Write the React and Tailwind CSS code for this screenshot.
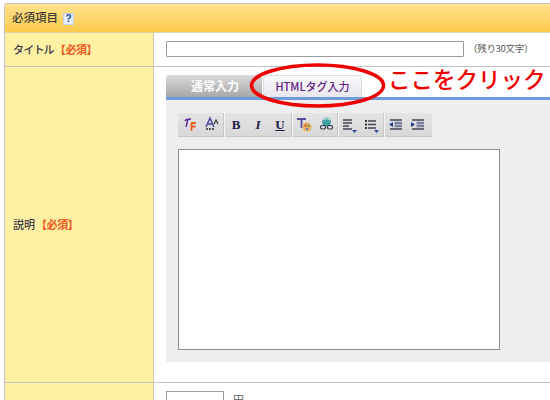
const jp = { fontFamily: '"Noto Sans CJK JP", sans-serif' };

function Sep() {
  return <div className="w-[2px] h-[24px] bg-[linear-gradient(90deg,#c8c8c8_50%,#f4f4f4_50%)]" />;
}

function Btn({ children }) {
  return <div className="w-[22px] h-[24px] flex items-center justify-center shrink-0">{children}</div>;
}

function Letter({ children, italic, underline }) {
  return (
    <span
      className={`font-['Liberation_Serif',serif] font-bold text-[13px] leading-none text-[#20204a] ${italic ? "italic" : ""} ${underline ? "underline" : ""}`}
    >
      {children}
    </span>
  );
}

function Lines({ arrow, bullets }) {
  return (
    <svg width="16" height="16" viewBox="0 0 16 16">
      {bullets && <rect x="1" y="3" width="2" height="2" fill="#334" />}
      {bullets && <rect x="1" y="6.500" width="2" height="2" fill="#334" />}
      {bullets && <rect x="1" y="10" width="2" height="2" fill="#334" />}
      <path
        d={bullets ? "M4 4h8M4 7.500h8M4 11h8" : "M1 3h9M1 6h9M1 9h6M1 12h9"}
        stroke="#445"
        strokeWidth="1.400"
      />
      {arrow && <path d="M10 13h5l-2.500 3z" fill="#2a4a9a" />}
    </svg>
  );
}

function Indent({ dir }) {
  return (
    <svg width="16" height="16" viewBox="0 0 16 16">
      <path d="M2 3h12M7 6h7M7 9h7M2 12h12" stroke="#445" strokeWidth="1.400" />
      <rect x="6" y="4.500" width="8" height="6" fill="#8a94b8" opacity="0.55" />
      <path d={dir === "l" ? "M1 7.500 5 5v5z" : "M5 7.500 1 5v5z"} fill="#1f3a8a" />
    </svg>
  );
}

export default function App() {
  return (
    <div className="relative w-[550px] h-[400px] overflow-hidden bg-white" style={jp}>
      <div className="pt-[3px] pl-[4px] w-[560px]">
        <div className="border-l border-t border-[#c4c4c4] rounded-tl-[3px]">
          <div className="h-[29px] flex items-center pl-[7px] gap-[5px] bg-[linear-gradient(180deg,#ffe28e,#fccb4b)] border-b border-[#d9d3b0]">
            <span className="text-[11.5px] font-medium leading-none text-[#3a3a3a]">必須項目</span>
            <span className="w-[11px] h-[12px] mt-[1px] flex items-center justify-center bg-[#e4ecfa] border border-[#c6d2e8] text-[10px] font-bold leading-none text-[#26489a] font-['Liberation_Sans',sans-serif]">
              ?
            </span>
          </div>

          <div className="flex h-[34px] border-b border-[#c4c4c4]">
            <div className="w-[149px] shrink-0 bg-[#fff1a3] border-r border-[#c9c9b0] flex items-center pl-[8px] text-[11px] font-medium text-[#3a3a4a]">
              <span className="tracking-[-0.8px]">タイトル</span>
              <span className="text-[#f0561c] ml-[1px] font-bold tracking-[-0.4px]">【必須】</span>
            </div>
            <div className="flex items-center pl-[12px] pb-[2px]">
              <div className="w-[298px] h-[16px] border border-[#9c9c9c] rounded-[1px] bg-white" />
              <span className="ml-[4px] text-[9.5px] tracking-[-0.3px] text-[#555]">（残り30文字）</span>
            </div>
          </div>

          <div className="flex h-[316px] border-b border-[#c4c4c4]">
            <div className="w-[149px] shrink-0 bg-[#fff1a3] border-r border-[#c9c9b0] flex items-center pl-[8px] text-[11px] font-medium text-[#3a3a4a]">
              説明<span className="text-[#f0561c] ml-[1px] font-bold tracking-[-0.4px]">【必須】</span>
            </div>
            <div className="pl-[12px] pt-[8px] flex-1">
              <div className="flex h-[22px] items-end">
                <div className="w-[96px] h-[22px] rounded-t-[4px] bg-[linear-gradient(180deg,#d9d9d9,#a8a8a8)] flex items-center justify-center text-[12px] font-bold text-white pl-[2px]">
                  通常入力
                </div>
                <div className="ml-[1px] w-[99px] h-[22px] rounded-t-[4px] bg-[linear-gradient(180deg,#fbfbfd,#e6e6ec)] border border-b-0 border-[#dcdce2] flex items-center justify-center text-[11px] font-medium text-[#62207e]">
                  HTMLタグ入力
                </div>
              </div>
              <div className="h-[3px] bg-[#6f9bd8]" />
              <div className="h-[262px] bg-[#eeeef0] pl-[12px] pt-[13px]">
                <div className="w-[254px] h-[24px] bg-[linear-gradient(180deg,#e4e4e4,#d8d8d8)] border-b border-[#c8c8c8] flex items-center pl-[1px]">
                  <Btn>
                    <svg width="17" height="17" viewBox="0 0 17 17">
                      <path d="M3 5c1-2 4-2 6-2M6 3 4 11" stroke="#5a2a9a" strokeWidth="1.400" fill="none" />
                      <path d="M9 7h5M9.500 7v8M9.500 10.500h4" stroke="#e8601c" strokeWidth="1.800" fill="none" />
                    </svg>
                  </Btn>
                  <Btn>
                    <svg width="17" height="17" viewBox="0 0 17 17">
                      <path d="M2 11 6 2l4 9M3.500 8h5" stroke="#4a4a9a" strokeWidth="1.500" fill="none" />
                      <path d="M10 8l2-4 2 4" stroke="#333" strokeWidth="1.200" fill="none" />
                      <path d="M2 13h9" stroke="#555" strokeWidth="2" strokeDasharray="2 1" />
                    </svg>
                  </Btn>
                  <Sep />
                  <Btn><Letter>B</Letter></Btn>
                  <Btn><Letter italic>I</Letter></Btn>
                  <Btn><Letter underline>U</Letter></Btn>
                  <Sep />
                  <Btn>
                    <svg width="17" height="17" viewBox="0 0 17 17">
                      <path d="M1 3h9M5.500 3v9" stroke="#5a4a9a" strokeWidth="1.800" />
                      <circle cx="11" cy="11" r="4.500" fill="#e8b060" />
                      <circle cx="9.500" cy="9.500" r="1" fill="#d83030" />
                      <circle cx="12.500" cy="10" r="1" fill="#30a040" />
                      <circle cx="11" cy="13" r="1" fill="#3060c0" />
                    </svg>
                  </Btn>
                  <Btn>
                    <svg width="17" height="17" viewBox="0 0 17 17">
                      <circle cx="8.500" cy="6" r="4.500" fill="#3fa0a0" />
                      <path d="M5 4c2-2 5-2 7 0" stroke="#c8e8e0" strokeWidth="1.200" fill="none" />
                      <rect x="2.500" y="9.500" width="5" height="3.500" rx="1.500" fill="#dde" stroke="#334" strokeWidth="1.200" />
                      <rect x="9.500" y="9.500" width="5" height="3.500" rx="1.500" fill="#dde" stroke="#334" strokeWidth="1.200" />
                    </svg>
                  </Btn>
                  <Sep />
                  <Btn><Lines arrow /></Btn>
                  <Btn><Lines arrow bullets /></Btn>
                  <Sep />
                  <Btn><Indent dir="l" /></Btn>
                  <Btn><Indent dir="r" /></Btn>
                </div>
                <div className="mt-[12px] w-[322px] h-[201px] bg-white border border-[#8e8e8e]" />
              </div>
            </div>
          </div>

          <div className="flex h-[30px]">
            <div className="w-[149px] shrink-0 bg-[#fff1a3] border-r border-[#c9c9b0]" />
            <div className="flex items-start pl-[12px] pt-[8px]">
              <div className="w-[58px] h-[20px] border border-[#9c9c9c] bg-white" />
              <span className="ml-[9px] text-[11px] leading-none mt-[3px] text-[#666]">円</span>
            </div>
          </div>
        </div>
      </div>

      <svg className="absolute left-[248px] top-[60px]" width="142" height="52" viewBox="0 0 142 52">
        <ellipse cx="69.500" cy="25.500" rx="66" ry="20.500" fill="none" stroke="#ee0000" strokeWidth="3.500" />
      </svg>
      <span className="absolute left-[388px] top-[62px] text-[22.5px] font-medium leading-[32px] whitespace-nowrap text-[#f00000]">
        ここをクリック
      </span>
    </div>
  );
}
